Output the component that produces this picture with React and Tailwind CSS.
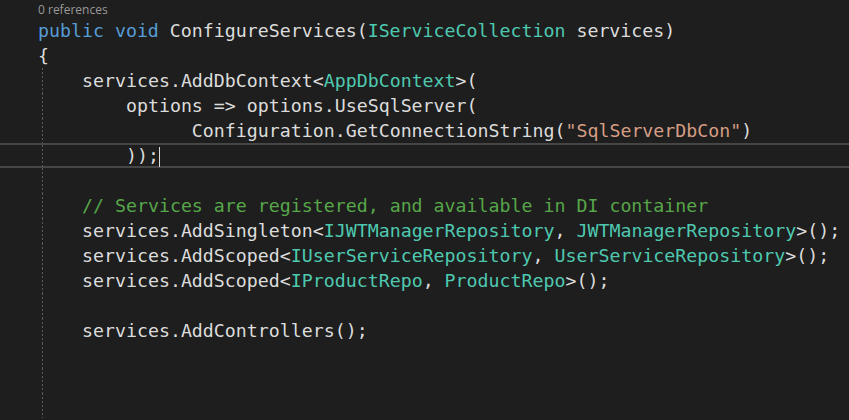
const C = {
  txt: "text-[#dcdcdc]",
  kw: "text-[#569cd6]",
  ty: "text-[#4ec9b0]",
  str: "text-[#d69d85]",
  cm: "text-[#57a64a]",
};

// each line: [tokens, guide?, current?]
const lines = [
  { guide: false, toks: [["public void ", "kw"], ["ConfigureServices(", "txt"], ["IServiceCollection", "ty"], [" services)", "txt"]] },
  { guide: false, toks: [["{", "txt"]] },
  { guide: true, toks: [["services.AddDbContext<", "txt"], ["AppDbContext", "ty"], [">(", "txt"]] },
  { guide: true, toks: [["    options => options.UseSqlServer(", "txt"]] },
  { guide: true, toks: [["          Configuration.GetConnectionString(", "txt"], ["\"SqlServerDbCon\"", "str"], [")", "txt"]] },
  { guide: true, current: true, toks: [["    ));", "txt"]] },
  { guide: true, toks: [] },
  { guide: true, toks: [["// Services are registered, and available in DI container", "cm"]] },
  { guide: true, toks: [["services.AddSingleton<", "txt"], ["IJWTManagerRepository", "ty"], [", ", "txt"], ["JWTManagerRepository", "ty"], [">();", "txt"]] },
  { guide: true, toks: [["services.AddScoped<", "txt"], ["IUserServiceRepository", "ty"], [", ", "txt"], ["UserServiceRepository", "ty"], [">();", "txt"]] },
  { guide: true, toks: [["services.AddScoped<", "txt"], ["IProductRepo", "ty"], [", ", "txt"], ["ProductRepo", "ty"], [">();", "txt"]] },
  { guide: true, toks: [] },
  { guide: true, toks: [["services.AddControllers();", "txt"]] },
  { guide: true, toks: [] },
  { guide: true, toks: [] },
  { guide: true, toks: [] },
];

function Line({ line }) {
  return (
    <div
      className={`flex h-[25px] items-center ${
        line.current ? "border-y-2 border-[#464646]" : ""
      }`}
    >
      {line.guide ? (
        <>
          <div className="w-[42px] shrink-0" />
          <div className="w-px shrink-0 self-stretch bg-[repeating-linear-gradient(to_bottom,#5c5c5c_0_2px,transparent_2px_4px)]" />
          <div className="whitespace-pre pl-[39px]">
            {line.toks.map(([t, c], i) => (
              <span key={i} className={C[c]}>{t}</span>
            ))}
            {line.current && (
              <span className="inline-block w-px h-[20px] bg-[#dcdcdc] align-middle" />
            )}
          </div>
        </>
      ) : (
        <div className="whitespace-pre pl-[38px]">
          {line.toks.map(([t, c], i) => (
            <span key={i} className={C[c]}>{t}</span>
          ))}
        </div>
      )}
    </div>
  );
}

export default function App() {
  return (
    <div className="w-[849px] h-[420px] overflow-hidden bg-[#1e1e1e]">
      <div className="h-[18px] pl-[38px] pt-[2px] text-[12px] leading-[16px] text-[#999999] font-['Open_Sans',sans-serif]">
        0 references
      </div>
      <div className="font-['DejaVu_Sans_Mono',monospace] text-[18.25px] leading-[25px]">
        {lines.map((l, i) => (
          <Line key={i} line={l} />
        ))}
      </div>
    </div>
  );
}
